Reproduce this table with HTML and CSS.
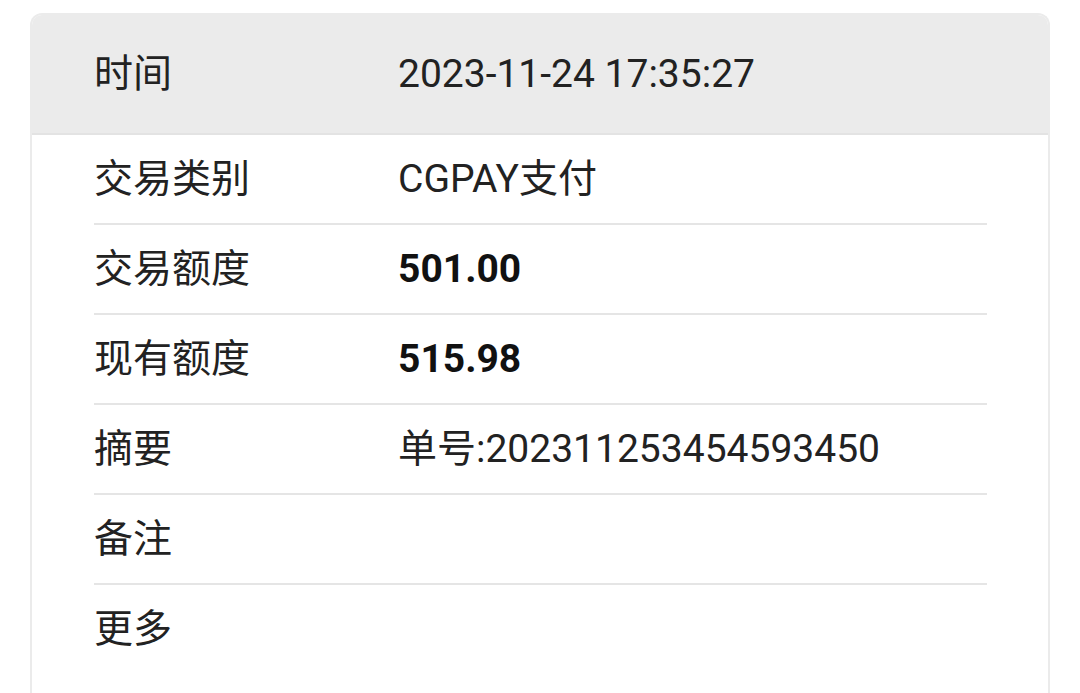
FILE: index.html
```html
<!DOCTYPE html>
<html lang="zh-CN">
<head>
<meta charset="utf-8">
<link rel="stylesheet" href="styles.css">
</head>
<body>
<div class="card">
  <div class="head">
    <div class="label">时间</div>
    <div class="value">2023-11-24 17:35:27</div>
  </div>
  <div class="list">
    <div class="row"><div class="label">交易类别</div><div class="value">CGPAY支付</div></div>
    <div class="row"><div class="label">交易额度</div><div class="value bold">501.00</div></div>
    <div class="row"><div class="label">现有额度</div><div class="value bold">515.98</div></div>
    <div class="row"><div class="label">摘要</div><div class="value">单号:202311253454593450</div></div>
    <div class="row"><div class="label">备注</div><div class="value"></div></div>
    <div class="row last"><div class="label">更多</div><div class="value"></div></div>
  </div>
</div>
</body>
</html>
```
FILE: styles.css
```css
html, body {
  margin: 0;
  padding: 0;
  background: #ffffff;
}
body {
  font-family: Roboto, "Noto Sans CJK SC", sans-serif;
  font-size: 39px;
  color: #222222;
  overflow: hidden;
  height: 693px;
}
.card {
  margin: 13px 30px 0 30px;
  border: 2px solid #ebebeb;
  border-bottom: none;
  border-radius: 12px 12px 0 0;
  height: 720px;
  box-sizing: border-box;
  overflow: hidden;
}
.head {
  background: #ebebeb;
  height: 118px;
  border-bottom: 2px solid #e3e3e3;
  display: grid;
  grid-template-columns: 304px 1fr;
  align-items: center;
  padding: 0 61px 0 62px;
}
.list {
  padding: 0 61px 0 62px;
}
.row {
  height: 88px;
  border-bottom: 2px solid #e5e5e5;
  display: grid;
  grid-template-columns: 304px 1fr;
  align-items: center;
}
.row.last {
  border-bottom: none;
}
.label, .value {
  line-height: 1;
  white-space: nowrap;
}
.bold {
  font-weight: 700;
  color: #111111;
}
```
